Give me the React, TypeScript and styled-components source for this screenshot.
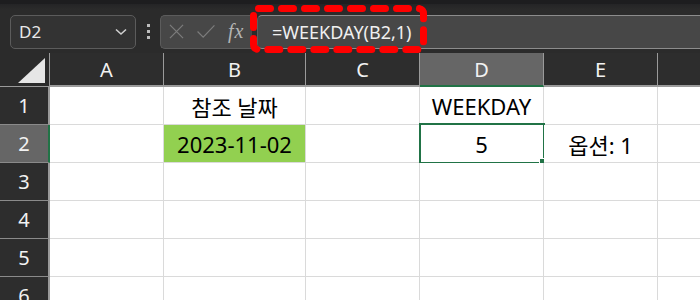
import React from "react";
import styled, { createGlobalStyle } from "styled-components";

const GlobalStyle = createGlobalStyle`
  html, body {
    margin: 0;
    padding: 0;
    background: #ffffff;
    overflow: hidden;
  }
  body {
    font-family: "Noto Sans", "Noto Sans CJK KR", sans-serif;
  }
`;

// F is wider than the window, its letter sits off screen
const columns = [
  { key: "A", width: 114, label: "A" },
  { key: "B", width: 142, label: "B" },
  { key: "C", width: 114, label: "C" },
  { key: "D", width: 124, label: "D" },
  { key: "E", width: 114, label: "E" },
  { key: "F", width: 200, label: "" },
];

type CellData = { text?: string; fill?: string };

const rows: Record<number, Record<string, CellData>> = {
  1: { B: { text: "참조 날짜" }, D: { text: "WEEKDAY" } },
  2: { B: { text: "2023-11-02", fill: "#92d050" }, D: { text: "5" }, E: { text: "옵션: 1" } },
};

const activeCol = "D";
const activeRow = 2;

export default function App() {
  return (
    <Page>
      <GlobalStyle />
      <TopStrip />
      <Toolbar>
        <NameBox>
          <span>D2</span>
          <Chevron viewBox="0 0 12 8">
            <path d="M1 1.5 L6 6 L11 1.5" />
          </Chevron>
        </NameBox>
        <Dots>
          <i />
          <i />
          <i />
        </Dots>
        <FxButtons>
          <IconSvg viewBox="0 0 16 16" $w={15}>
            <path d="M1 1 L15 15 M15 1 L1 15" />
          </IconSvg>
          <IconSvg viewBox="0 0 20 16" $w={20}>
            <path d="M1 8 L7 14 L19 1.5" />
          </IconSvg>
          <FxLabel>fx</FxLabel>
        </FxButtons>
        <FormulaInput>=WEEKDAY(B2,1)</FormulaInput>
        <Annotation viewBox="0 0 180 50">
          <rect x="3.5" y="3.5" width="170" height="41" rx="5" />
        </Annotation>
      </Toolbar>

      <Grid $cols={columns.map((c) => c.width)}>
        <Corner>
          <svg width="28" height="25" viewBox="0 0 28 25">
            <polygon points="27,0 27,25 0,25" fill="#e6e6e6" />
          </svg>
        </Corner>
        {columns.map((c) => (
          <ColHeader key={c.key} $active={c.key === activeCol}>
            {c.label}
          </ColHeader>
        ))}
        {[1, 2, 3, 4, 5, 6].map((r) => (
          <React.Fragment key={r}>
            <RowHeader $active={r === activeRow}>{r}</RowHeader>
            {columns.map((c) => {
              const cell = rows[r]?.[c.key];
              const selected = r === activeRow && c.key === activeCol;
              return (
                <Cell key={c.key} $fill={cell?.fill}>
                  {cell?.text}
                  {selected && (
                    <Selection>
                      <FillHandle />
                    </Selection>
                  )}
                </Cell>
              );
            })}
          </React.Fragment>
        ))}
      </Grid>
    </Page>
  );
}

/* styles */

const Page = styled.div`
  width: 700px;
  height: 300px;
  overflow: hidden;
  background: #2b2b2b;
`;

const TopStrip = styled.div`
  height: 4px;
  background: #1d1d1f;
`;

const Toolbar = styled.div`
  position: relative;
  display: flex;
  align-items: center;
  height: 49px;
  padding: 6px 0 0 10px;
  box-sizing: border-box;
  background: linear-gradient(#242426, #2b2b2b 6px);
`;

const NameBox = styled.div`
  display: flex;
  align-items: center;
  justify-content: space-between;
  width: 126px;
  height: 34px;
  box-sizing: border-box;
  padding: 0 8px 0 8px;
  border: 1px solid #5c5c5c;
  border-radius: 5px;
  background: #333333;
  color: #e8e8e8;
  font-size: 17px;
`;

const Chevron = styled.svg`
  width: 12px;
  height: 8px;
  fill: none;
  stroke: #cfcfcf;
  stroke-width: 1.6;
`;

const Dots = styled.div`
  display: flex;
  flex-direction: column;
  gap: 3px;
  margin: 0 10px 0 11px;

  i {
    display: block;
    width: 3px;
    height: 3px;
    background: #bdbdbd;
  }
`;

const FxButtons = styled.div`
  display: flex;
  align-items: center;
  gap: 12px;
  width: 92px;
  height: 34px;
  box-sizing: border-box;
  padding: 0 6px 0 8px;
  border: 1px solid #5c5c5c;
  border-right: none;
  border-radius: 5px 0 0 5px;
  background: #474747;
`;

const IconSvg = styled.svg<{ $w: number }>`
  width: ${({ $w }) => $w}px;
  height: 15px;
  fill: none;
  stroke: #7c7c7c;
  stroke-width: 1.3;
`;

const FxLabel = styled.span`
  color: #b4b4b4;
  font-family: "Liberation Serif", serif;
  font-style: italic;
  font-size: 20px;
  letter-spacing: 1px;
`;

const FormulaInput = styled.div`
  flex: 1;
  display: flex;
  align-items: center;
  height: 34px;
  margin-left: 5px;
  padding-left: 14px;
  box-sizing: border-box;
  border-top: 1px solid #8c8c8c;
  border-bottom: 1px solid #8c8c8c;
  border-left: 1px solid #5c5c5c;
  border-radius: 5px 0 0 5px;
  background: #474747;
  color: #f0f0f0;
  font-size: 18px;
`;

const Annotation = styled.svg`
  position: absolute;
  left: 250px;
  top: 1px;
  width: 180px;
  height: 50px;
  overflow: visible;

  rect {
    fill: none;
    stroke: #ff0000;
    stroke-width: 7;
    stroke-linecap: round;
    stroke-dasharray: 12 11;
  }
`;

const Grid = styled.div<{ $cols: number[] }>`
  display: grid;
  grid-template-columns: 50px ${({ $cols }) => $cols.map((w) => `${w}px`).join(" ")};
  grid-template-rows: 34px repeat(6, 38px);
  background: #ffffff;
`;

const Corner = styled.div`
  display: flex;
  align-items: flex-end;
  justify-content: flex-end;
  padding: 0 3px 3px 0;
  background: #2b2b2b;
  border-right: 1px solid #9a9a9a;
  border-bottom: 1px solid #9a9a9a;
`;

const ColHeader = styled.div<{ $active: boolean }>`
  display: flex;
  align-items: center;
  justify-content: center;
  background: ${({ $active }) => ($active ? "#666666" : "#2d2d2d")};
  color: #f2f2f2;
  font-size: 20px;
  border-right: 1px solid #9a9a9a;
  border-bottom: 2px solid ${({ $active }) => ($active ? "#217346" : "#9a9a9a")};
  box-sizing: border-box;
`;

const RowHeader = styled.div<{ $active: boolean }>`
  display: flex;
  align-items: center;
  justify-content: center;
  background: ${({ $active }) => ($active ? "#666666" : "#2d2d2d")};
  color: #f2f2f2;
  font-size: 20px;
  border-bottom: 1px solid #8a8a8a;
  border-right: 2px solid ${({ $active }) => ($active ? "#217346" : "#9a9a9a")};
  box-sizing: border-box;
`;

const Cell = styled.div<{ $fill?: string }>`
  position: relative;
  display: flex;
  align-items: center;
  justify-content: center;
  background: ${({ $fill }) => $fill ?? "#ffffff"};
  color: #000000;
  font-size: 22px;
  border-right: 1px solid #dadada;
  border-bottom: 1px solid #dadada;
  box-sizing: border-box;
  white-space: nowrap;
`;

const Selection = styled.div`
  position: absolute;
  left: -1px;
  top: -2px;
  right: -2px;
  bottom: -2px;
  border: 2px solid #217346;
  pointer-events: none;
`;

const FillHandle = styled.div`
  position: absolute;
  right: -4px;
  bottom: -4px;
  width: 6px;
  height: 6px;
  background: #217346;
  border: 1px solid #ffffff;
`;
